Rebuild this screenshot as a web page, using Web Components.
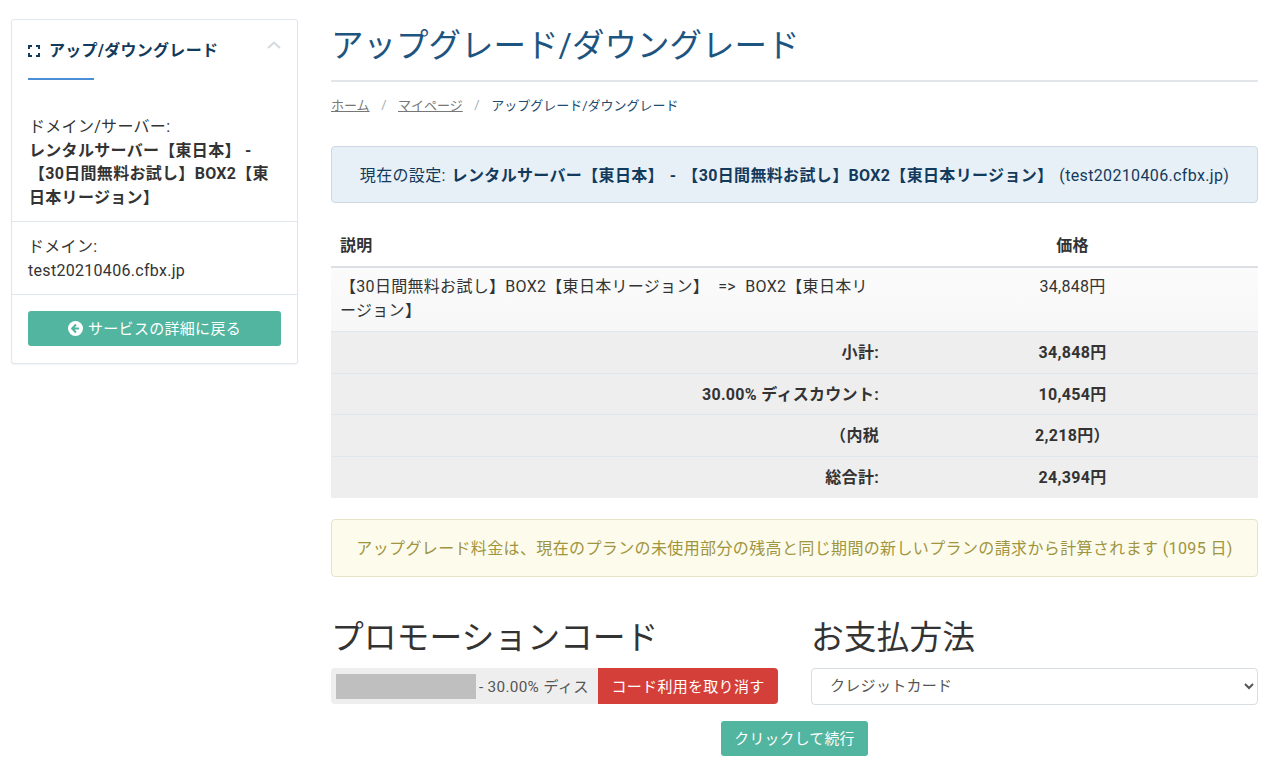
<!DOCTYPE html>
<html lang="ja">
<head>
<meta charset="utf-8">
<title>アップグレード/ダウングレード</title>
<style>
    html, body { margin: 0; padding: 0; background: #fff; }
    body {
        font-family: Roboto, "Noto Sans CJK JP", sans-serif;
        font-size: 16px;
        letter-spacing: .3px;
        color: #333;
    }
</style>
</head>
<body>
<upgrade-page>
    <side-panel slot="side"></side-panel>
    <page-header slot="main"></page-header>
    <info-box slot="main" kind="info">現在の設定: <b>レンタルサーバー【東日本】 - 【30日間無料お試し】BOX2【東日本リージョン】</b> (test20210406.cfbx.jp)</info-box>
    <order-table slot="main"></order-table>
    <info-box slot="main" kind="warn">アップグレード料金は、現在のプランの未使用部分の残高と同じ期間の新しいプランの請求から計算されます (1095 日)</info-box>
    <checkout-form slot="main"></checkout-form>
</upgrade-page>

<script>
class UpgradePage extends HTMLElement {
    constructor() {
        super();
        const shadow = this.attachShadow({mode: 'open'});
        shadow.innerHTML = `
            <style>
                :host { display: flex; align-items: flex-start; width: 1280px; height: 776px; overflow: hidden; box-sizing: border-box; padding: 19px 22px 0 11px; }
                .side { display: block; width: 287px; flex: none; }
                .main { display: block; flex: 1; min-width: 0; margin: -19px 0 0 33px; }
            </style>
            <div class="side"><slot name="side"></slot></div>
            <div class="main"><slot name="main"></slot></div>
        `;
    }
}

class SidePanel extends HTMLElement {
    constructor() {
        super();
        const shadow = this.attachShadow({mode: 'open'});
        shadow.innerHTML = `
            <style>
                :host { display: block; box-sizing: border-box; height: 345px; background: #fff; border: 1px solid #dfe6ee; border-radius: 3px; box-shadow: 0 1px 2px rgba(0,0,0,.05); color: #333; }
                .head { position: relative; padding: 20px 16px 0; height: 60px; box-sizing: content-box; }
                h3 { display: flex; align-items: center; gap: 9px; margin: 0; font-size: 16px; line-height: 22px; font-weight: 700; color: #123a5c; }
                .rule { width: 66px; height: 2px; background: #4a8fd6; margin-top: 16px; }
                .chev { position: absolute; right: 16px; top: 21px; }
                .sec { padding: 0 17px; line-height: 23.5px; }
                .sec.first { padding: 15px 17px 13px; border-bottom: 1px solid #dfe6ee; height: 93px; }
                .sec.second { padding: 13px 17px 13px 16px; border-bottom: 1px solid #dfe6ee; height: 46px; }
                .foot { padding: 16px 16px; }
                .btn { display: flex; align-items: center; justify-content: center; gap: 5px; height: 35px; padding-bottom: 2px; box-sizing: border-box; border-radius: 3px; background: #52b5a0; color: #fff; font-size: 15px; }
                .btn svg { margin-top: 2px; }
            </style>
            <div class="head">
                <h3>
                    <svg width="12" height="12" viewBox="0 0 12 12" fill="none" stroke="#123a5c" stroke-width="2"><path d="M1 4V1h3M8 1h3v3M11 8v3H8M4 11H1V8"/></svg>
                    アップ/ダウングレード
                </h3>
                <div class="rule"></div>
                <svg class="chev" width="14" height="8" viewBox="0 0 14 8" fill="none" stroke="#d4d9de" stroke-width="2"><path d="M1 7l6-5.5L13 7"/></svg>
            </div>
            <div class="sec first">ドメイン/サーバー:<br><b>レンタルサーバー【東日本】 - 【30日間無料お試し】BOX2【東日本リージョン】</b></div>
            <div class="sec second">ドメイン:<br>test20210406.cfbx.jp</div>
            <div class="foot">
                <div class="btn">
                    <svg width="15" height="15" viewBox="0 0 16 16"><circle cx="8" cy="8" r="8" fill="#fff"/><path d="M8.5 3.8L4.5 8l4 4.2M4.8 8h7" fill="none" stroke="#52b5a0" stroke-width="2.2"/></svg>
                    サービスの詳細に戻る
                </div>
            </div>
        `;
    }
}

class PageHeader extends HTMLElement {
    constructor() {
        super();
        const shadow = this.attachShadow({mode: 'open'});
        shadow.innerHTML = `
            <style>
                :host { display: block; }
                h1 { margin: 0; height: 82px; box-sizing: border-box; padding-top: 21px; border-bottom: 2px solid #e2e6ea; font-size: 32.5px; line-height: 50px; font-weight: 400; letter-spacing: 0; color: #1d5580; white-space: nowrap; }
                nav { display: flex; align-items: center; height: 46px; padding-bottom: 2px; box-sizing: border-box; font-size: 13px; color: #777; letter-spacing: 0; }
                a { color: #777; text-decoration: underline; }
                i { font-style: normal; color: #aaa; margin: 0 11.5px; }
                span { color: #1d4a6e; }
            </style>
            <h1>アップグレード/ダウングレード</h1>
            <nav><a>ホーム</a><i>/</i><a>マイページ</a><i>/</i><span>アップグレード/ダウングレード</span></nav>
        `;
    }
}

class InfoBox extends HTMLElement {
    constructor() {
        super();
        const shadow = this.attachShadow({mode: 'open'});
        shadow.innerHTML = `
            <style>
                :host { display: flex; align-items: center; justify-content: center; box-sizing: border-box; height: 57px; padding-bottom: 2px; border-radius: 4px; white-space: nowrap; }
                :host([kind="info"]) { margin-top: 18px; background: #e8f0f7; border: 1px solid #ccd9e4; color: #123a5c; letter-spacing: .35px; word-spacing: 1.5px; }
                :host([kind="warn"]) { margin-top: 21px; height: 58px; background: #fdfcec; border: 1px solid #e6e4c4; color: #a0943f; letter-spacing: .37px; }
            </style>
            <div><slot></slot></div>
        `;
    }
}

class OrderTable extends HTMLElement {
    constructor() {
        super();
        const shadow = this.attachShadow({mode: 'open'});
        const sums = [
            ['小計:', '34,848円'],
            ['30.00% ディスカウント:', '10,454円'],
            ['（内税', '2,218円）'],
            ['総合計:', '24,394円']
        ];
        shadow.innerHTML = `
            <style>
                :host { display: block; margin-top: 21px; color: #333; }
                .row { display: grid; grid-template-columns: 556px 371px; box-sizing: border-box; }
                .cell { padding: 0 9px; }
                .amount { text-align: center; }
                .head { height: 44px; padding-bottom: 2px; align-items: center; font-weight: 700; border-bottom: 2px solid #dcdfe3; }
                .item { height: 64px; padding-top: 7px; line-height: 24px; background: linear-gradient(#fbfbfb, #f7f7f7); border-bottom: 1px solid #dfe6ee; }
                .item .desc { padding-right: 15px; word-spacing: 5px; }
                .sum { height: 41.5px; padding-bottom: 2px; align-items: center; background: #eeeeee; border-bottom: 1px solid #dfe6ee; font-weight: 700; }
                .sum:last-child { border-bottom: none; }
                .sum .label { text-align: right; padding: 0 8px 0 0; }
            </style>
            <div class="row head"><div class="cell">説明</div><div class="cell amount">価格</div></div>
            <div class="row item"><div class="cell desc">【30日間無料お試し】BOX2【東日本リージョン】 =&gt; BOX2【東日本リージョン】</div><div class="cell amount">34,848円</div></div>
            ${sums.map(s => `<div class="row sum"><div class="cell label">${s[0]}</div><div class="cell amount">${s[1]}</div></div>`).join('')}
        `;
    }
}

class CheckoutForm extends HTMLElement {
    constructor() {
        super();
        const shadow = this.attachShadow({mode: 'open'});
        shadow.innerHTML = `
            <style>
                :host { display: block; margin-top: 36px; }
                .cols { display: grid; grid-template-columns: 447px 447px; column-gap: 33px; }
                h2 { margin: 0 0 8px; padding-top: 3px; font-size: 32.8px; line-height: 44px; font-weight: 400; letter-spacing: 0; color: #333; white-space: nowrap; }
                .group { display: flex; height: 36px; border-radius: 4px; overflow: hidden; background: #eee; }
                .code { flex: 1; min-width: 0; display: flex; align-items: center; padding: 0 0 2px 5px; font-size: 15.3px; color: #555; white-space: nowrap; overflow: hidden; }
                .mask { flex: none; width: 140px; height: 25px; margin-top: 2px; background: #bfbfbf; margin-right: 3px; }
                .cancel { flex: none; width: 180px; display: flex; align-items: center; justify-content: center; padding-bottom: 1px; box-sizing: border-box; background: #d43f3a; color: #fff; font-size: 15px; }
                select { width: 100%; height: 37px; box-sizing: border-box; padding: 0 14px 2px; background: #fff; border: 1px solid #d8dde2; border-radius: 4px; font: inherit; font-size: 15px; color: #555; letter-spacing: .3px; }
                .go { display: flex; justify-content: center; margin-top: 16px; }
                .go div { display: flex; align-items: center; justify-content: center; width: 147px; height: 35px; padding-bottom: 2px; box-sizing: border-box; border-radius: 3px; background: #52b5a0; color: #fff; font-size: 14.8px; }
            </style>
            <div class="cols">
                <div>
                    <h2>プロモーションコード</h2>
                    <div class="group"><div class="code"><div class="mask"></div>- 30.00% ディス</div><div class="cancel">コード利用を取り消す</div></div>
                </div>
                <div>
                    <h2>お支払方法</h2>
                    <select><option>クレジットカード</option></select>
                </div>
            </div>
            <div class="go"><div>クリックして続行</div></div>
        `;
    }
}

customElements.define('upgrade-page', UpgradePage);
customElements.define('side-panel', SidePanel);
customElements.define('page-header', PageHeader);
customElements.define('info-box', InfoBox);
customElements.define('order-table', OrderTable);
customElements.define('checkout-form', CheckoutForm);
</script>
</body>
</html>
